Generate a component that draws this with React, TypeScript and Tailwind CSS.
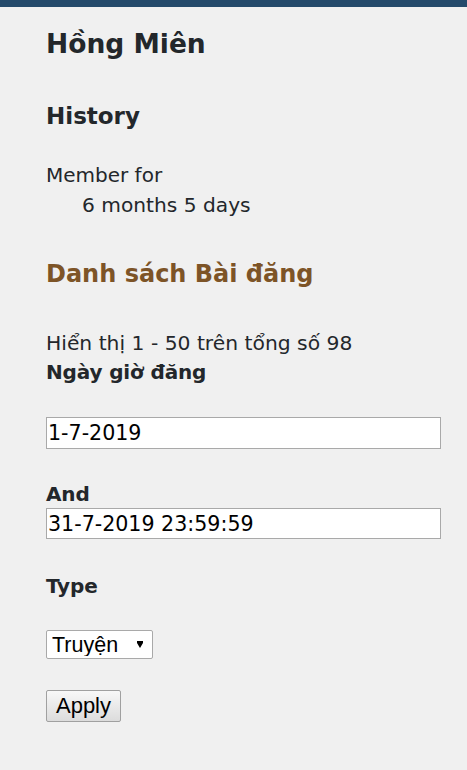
export default function App() {
  return (
    <div className="min-h-screen bg-[#f0f0f0] text-[#23272b] font-['DejaVu_Sans',Verdana,sans-serif]">
      <div className="h-[7px] bg-[#244a6b]" />

      <div className="pl-[46px] pr-[26px]">
        <h1 className="mt-[22px] text-[26.5px] leading-[30px] font-bold">Hồng Miên</h1>

        <h2 className="mt-[43px] text-[23px] leading-[28px] font-bold">History</h2>

        <dl className="mt-[30px] text-[20px] leading-[30px]">
          <dt>Member for</dt>
          <dd className="pl-[36px] text-[20.2px]">6 months 5 days</dd>
        </dl>

        <h2 className="mt-[40px] text-[24px] leading-[28px] font-bold text-[#7d5427]">
          Danh sách Bài đăng
        </h2>

        <p className="mt-[40px] pt-[1px] text-[20.3px] leading-[28px]">Hiển thị 1 - 50 trên tổng số 98</p>

        <form onSubmit={(e) => e.preventDefault()}>
          <label className="block pt-[2px] text-[20px] leading-[27px] font-bold tracking-[-0.15px]">Ngày giờ đăng</label>
          <input
            type="text"
            defaultValue="1-7-2019"
            className="mt-[31px] block w-full h-[32px] border border-[#a9a9a9] bg-white pl-[1px] text-[20.6px] text-black outline-none"
          />

          <label className="mt-[30px] block pt-[2px] text-[20px] leading-[27px] font-bold tracking-[-0.15px]">And</label>
          <input
            type="text"
            defaultValue="31-7-2019 23:59:59"
            className="block w-full h-[31px] border border-[#a9a9a9] bg-white pl-[1px] text-[20.6px] text-black outline-none"
          />

          <label className="mt-[32px] block pt-[2px] text-[20px] leading-[27px] font-bold tracking-[-0.15px]">Type</label>
          <div className="relative mt-[30px] w-[107px] h-[29px]">
            <select
              defaultValue="truyen"
              className="appearance-none block w-full h-full border border-[#a9a9a9] rounded-[2px] bg-white pl-[5px] pt-[2px] text-[21.5px] leading-none text-black font-['Liberation_Sans',Arial,sans-serif] outline-none"
            >
              <option value="truyen">Truyện</option>
              <option value="tho">Thơ</option>
            </select>
            <svg
              className="pointer-events-none absolute left-[91px] top-[11px]"
              width="6"
              height="7"
              viewBox="0 0 6 7"
            >
              <path d="M0 0 H6 V2 L3 7 L0 2 Z" fill="#000" />
            </svg>
          </div>

          <button
            type="submit"
            className="mt-[31px] block w-[75px] h-[32px] border border-[#a0a0a0] rounded-[2px] bg-gradient-to-b from-[#f8f8f8] to-[#dcdcdc] text-[22px] leading-none text-black font-['Liberation_Sans',Arial,sans-serif]"
          >
            Apply
          </button>
        </form>
      </div>
    </div>
  );
}
